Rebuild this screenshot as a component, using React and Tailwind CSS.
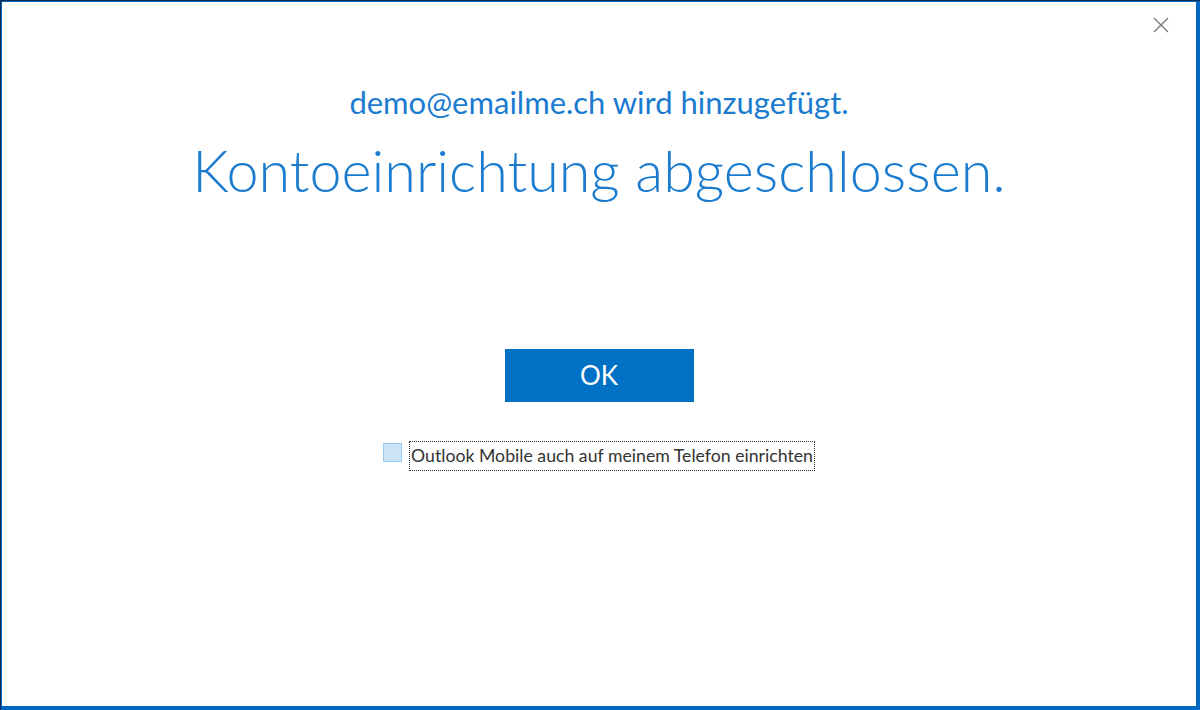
export default function App() {
  return (
    <div className="w-[1200px] h-[710px] bg-[#0a2d57] pl-px pt-px">
      <div className="w-[1199px] h-[709px] bg-[#0067c0] pl-px pt-px pr-[4px] pb-[4px]">
        <div className="relative w-full h-full bg-white flex flex-col items-center font-['Lato',sans-serif]">
          <button className="absolute top-[10px] right-[22px] w-[26px] h-[26px] flex items-center justify-center text-[#777]">
            <svg width="16" height="16" viewBox="0 0 16 16" fill="none" stroke="currentColor" strokeWidth="1.3">
              <path d="M1 1L15 15M15 1L1 15" />
            </svg>
          </button>

          <p className="mt-[81px] text-[31px] leading-[38px] text-[#1a7bcf]">
            demo@emailme.ch wird hinzugefügt.
          </p>
          <h1 className="mt-[13px] text-[57.5px] leading-[72px] font-light text-[#1a7bcf]">
            Kontoeinrichtung abgeschlossen.
          </h1>

          <button className="mt-[143px] w-[189px] h-[53px] bg-[#0072c6] text-white text-[26px]">
            OK
          </button>

          <div className="mt-[39px] flex items-start gap-[7px]">
            <span className="mt-[2px] w-[19px] h-[19px] bg-[#cce4f7] border border-[#99c9ef]" />
            <span className="border border-dotted border-[#333] px-px h-[30px] flex items-center text-[17.7px] text-[#333]">
              Outlook Mobile auch auf meinem Telefon einrichten
            </span>
          </div>
        </div>
      </div>
    </div>
  );
}
